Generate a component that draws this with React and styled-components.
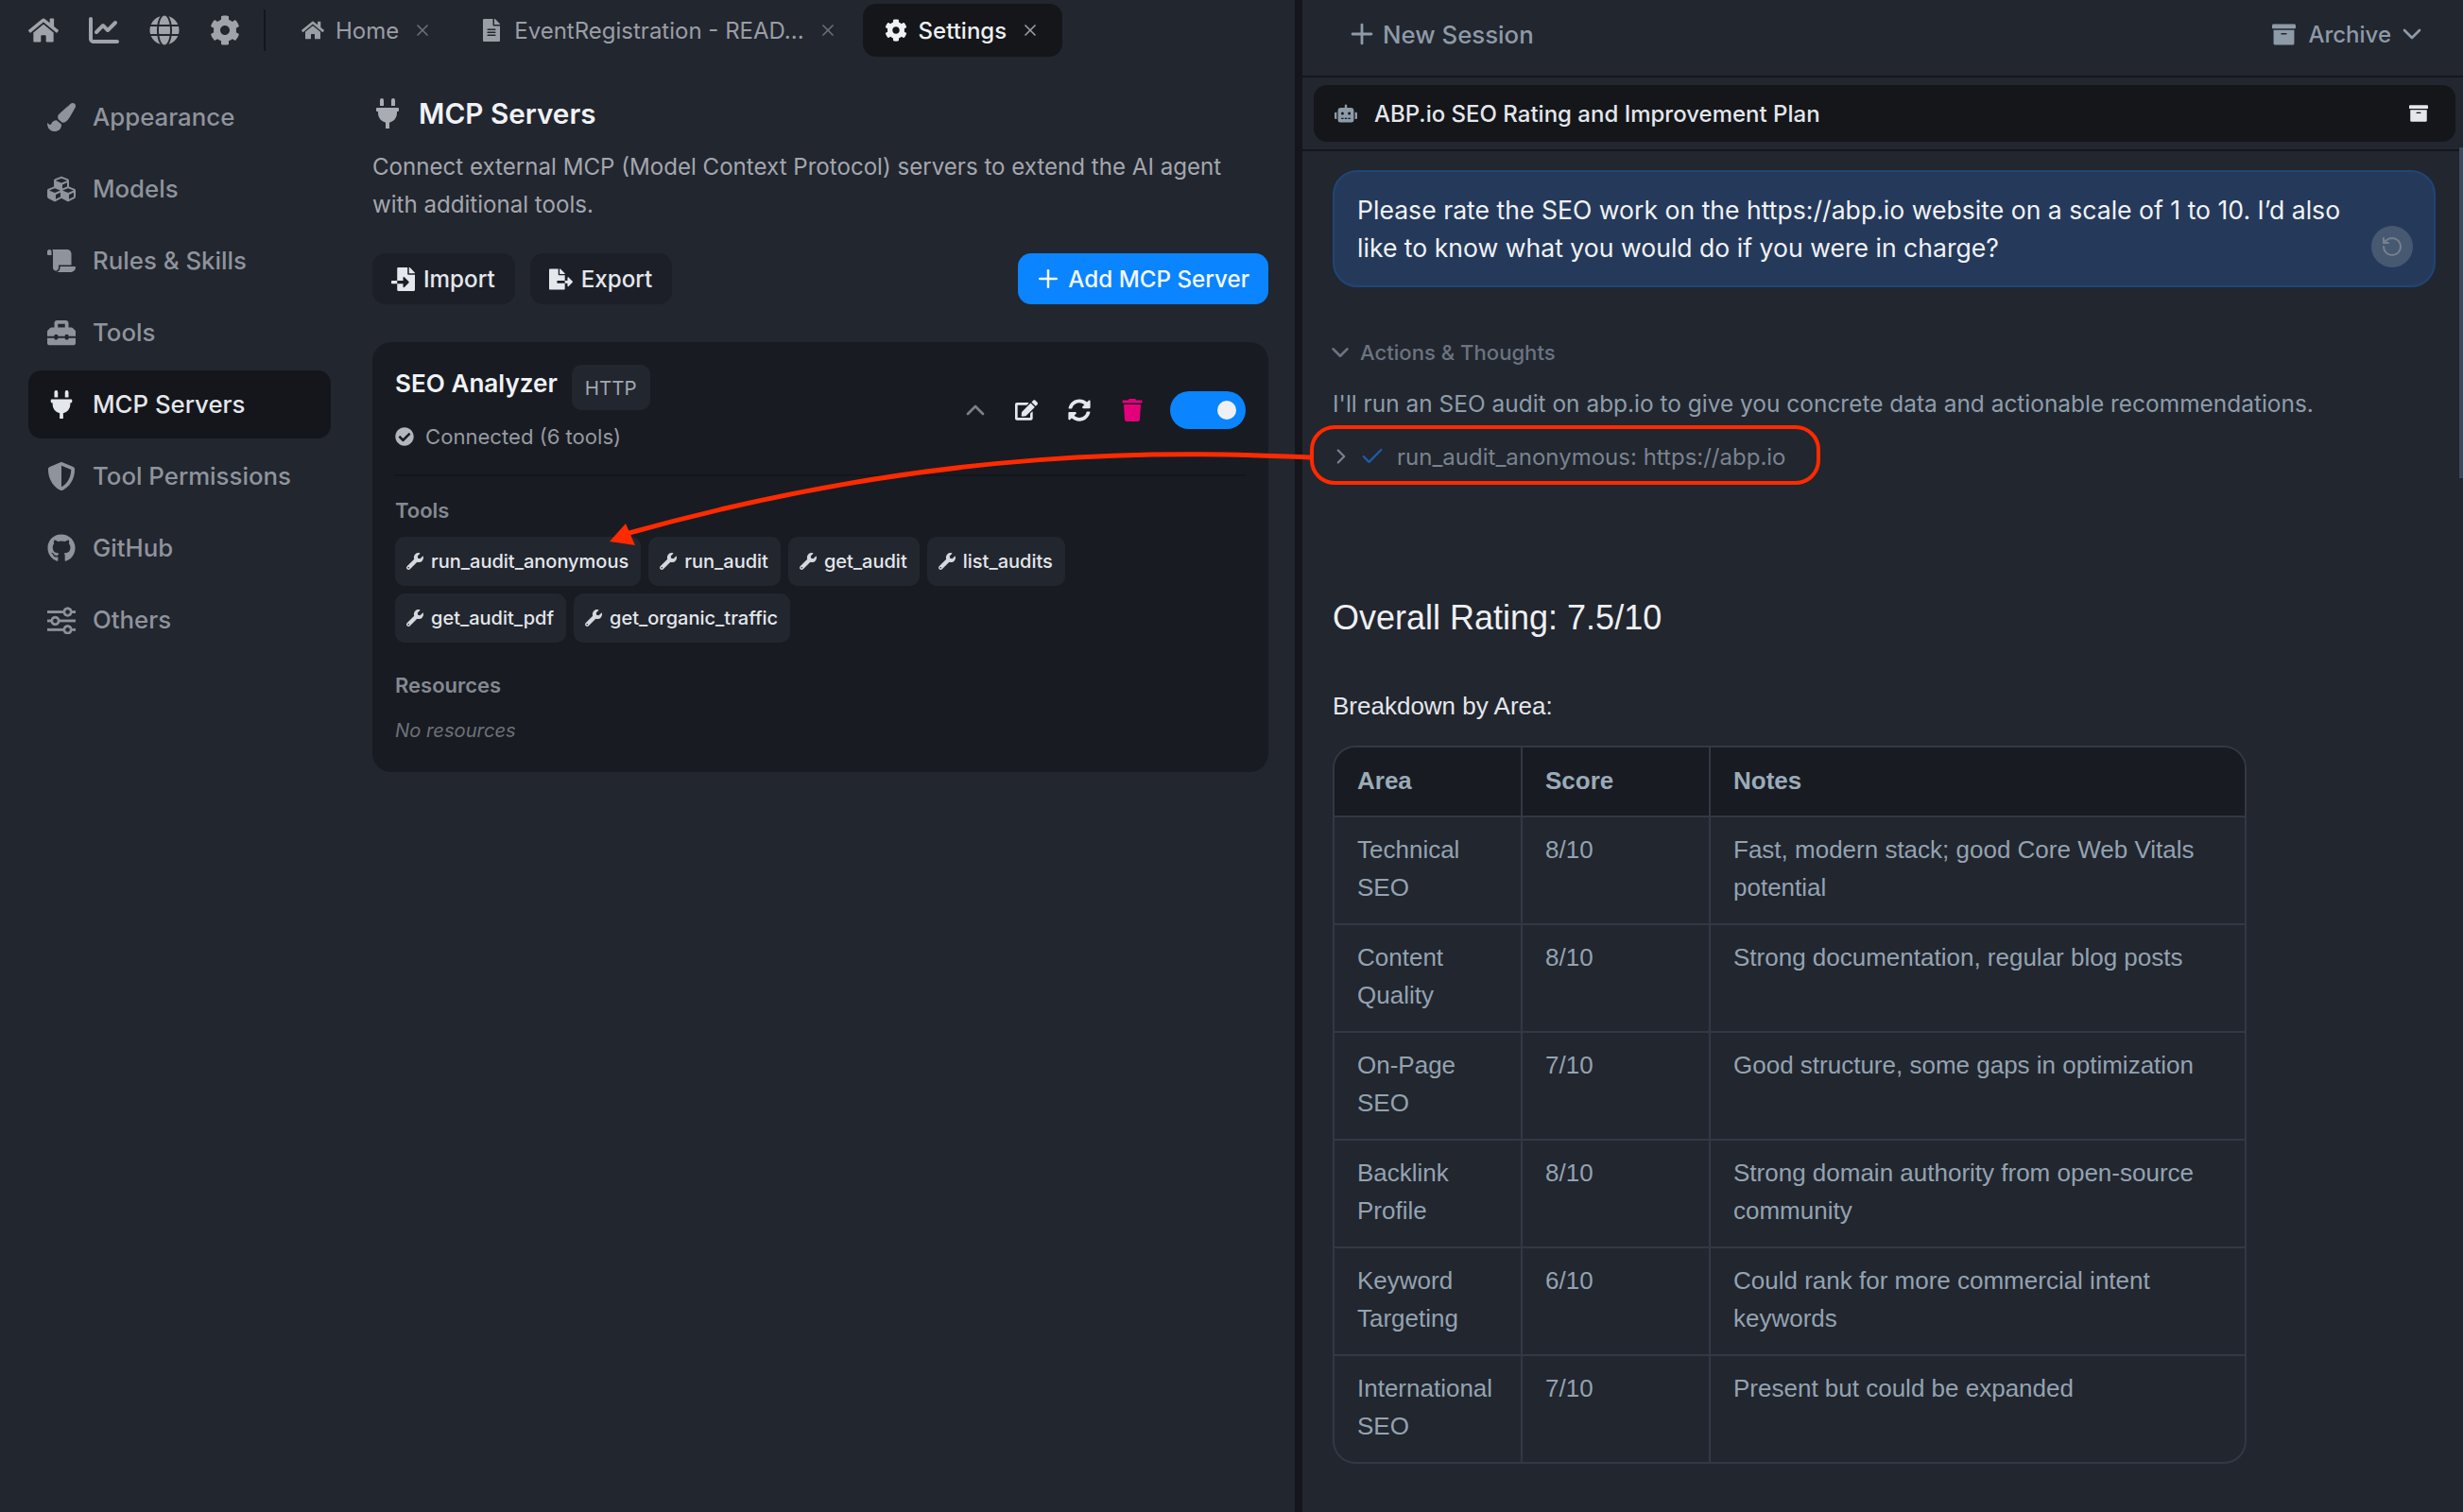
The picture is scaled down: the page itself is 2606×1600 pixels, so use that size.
import styled, { createGlobalStyle } from 'styled-components';
import {
  FaHome, FaGlobe, FaCog, FaFileAlt, FaPaintBrush, FaCubes, FaScroll, FaToolbox, FaPlug,
  FaShieldAlt, FaGithub, FaFileImport, FaFileExport, FaCheckCircle, FaWrench, FaEdit, FaSyncAlt,
  FaTrash, FaRobot, FaArchive,
} from 'react-icons/fa';
import { FaChartLine } from 'react-icons/fa6';
import { BsSliders } from 'react-icons/bs';
import { ChevronDown, ChevronRight, ChevronUp, Check, Plus, RotateCcw, X } from 'lucide-react';

const GlobalStyle = createGlobalStyle`
  html, body { margin: 0; padding: 0; background: #22262f; }
  body { font-family: Inter, "Noto Sans", sans-serif; width: 2606px; height: 1600px; overflow: hidden; }
  * { box-sizing: border-box; }
  svg { flex-shrink: 0; }
`;

const Page = styled.div`
  position: relative;
  display: flex;
  width: 2606px;
  height: 1600px;
  overflow: hidden;
  background: #22262f;
`;

const LeftPane = styled.div`
  width: 1370px;
  flex-shrink: 0;
`;

const Splitter = styled.div`
  width: 8px;
  flex-shrink: 0;
  background: #14161b;
`;

const RightPane = styled.div`
  position: relative;
  flex: 1;
  min-width: 0;
`;

const TopBar = styled.div`
  display: flex;
  align-items: center;
  height: 64px;
  padding-left: 30px;
`;

const NavIcon = styled.span`
  display: flex;
  justify-content: center;
  width: 32px;
  margin-right: 32px;
  font-size: 32px;
  color: #a0a4aa;
`;

const TopDivider = styled.span`
  width: 2px;
  height: 44px;
  margin-left: -7px;
  margin-right: 15px;
  background: #14161b;
`;

const Tab = styled.div`
  display: flex;
  align-items: center;
  height: 56px;
  margin-right: ${(p) => p.$gap || 0}px;
  padding: 0 24px 0 23px;
  border-radius: 14px;
  background: ${(p) => (p.$active ? '#14161a' : 'transparent')};
  color: ${(p) => (p.$active ? '#eef0f3' : '#9a9ea5')};
  font-size: 24px;
  font-weight: ${(p) => (p.$active ? 500 : 400)};
  svg.tab-icon { font-size: 24px; margin-right: 12px; }
  svg.tab-close { margin-left: 15px; color: ${(p) => (p.$active ? '#9a9ea5' : '#6b7078')}; }
`;

const Body = styled.div`
  display: flex;
`;

const Sidebar = styled.nav`
  display: flex;
  flex-direction: column;
  gap: 4px;
  width: 394px;
  flex-shrink: 0;
  padding: 24px 44px 0 30px;
`;

const SideItem = styled.div`
  display: flex;
  align-items: center;
  height: 72px;
  padding: 0 0 1px 20px;
  border-radius: 14px;
  background: ${(p) => (p.$active ? '#14161b' : 'transparent')};
  color: ${(p) => (p.$active ? '#e4e7ec' : '#8f949c')};
  font-size: 25.8px;
  font-weight: 500;
`;

const SideIcon = styled.span`
  display: flex;
  justify-content: center;
  width: 30px;
  margin-right: 18px;
  font-size: 30px;
`;

const SlidersIcon = styled(BsSliders)`
  stroke: currentColor;
  stroke-width: 0.5px;
`;

const Content = styled.main`
  width: 948px;
  padding-top: 36px;
`;

const Heading = styled.h1`
  display: flex;
  align-items: center;
  height: 40px;
  margin: 0 0 17px;
  color: #f0f2f5;
  font-size: 29.7px;
  font-weight: 600;
  svg { font-size: 32px; color: #a9adb3; margin: 0 17px 0 0; }
`;

const Description = styled.p`
  margin: 0 0 31px;
  color: #a3a7ae;
  font-size: 24.1px;
  line-height: 40px;
`;

const ButtonRow = styled.div`
  display: flex;
  gap: 16px;
  margin-bottom: 40px;
`;

const Button = styled.button`
  display: flex;
  align-items: center;
  gap: ${(p) => (p.$primary ? 6 : 9)}px;
  height: 54px;
  margin-left: ${(p) => (p.$primary ? 'auto' : '0')};
  padding: ${(p) => (p.$primary ? '0 20px 0 17px' : '0 21px 0 20px')};
  border: none;
  border-radius: 14px;
  background: ${(p) => (p.$primary ? '#0a84ff' : '#1c1f27')};
  color: ${(p) => (p.$primary ? '#f4f8ff' : '#e4e7ec')};
  font-family: inherit;
  font-size: 24.2px;
  font-weight: 500;
  svg { font-size: 25px; }
`;

const Card = styled.section`
  padding: 24px 24px 29px;
  border-radius: 20px;
  background: #181b22;
`;

const CardHeader = styled.div`
  display: flex;
  align-items: center;
  justify-content: space-between;
  padding-bottom: 20px;
  border-bottom: 2px solid #14161b;
`;

const NameRow = styled.div`
  display: flex;
  align-items: flex-start;
  gap: 15px;
`;

const ServerName = styled.div`
  color: #f0f2f5;
  font-size: 26.1px;
  font-weight: 600;
  line-height: 40px;
`;

const Badge = styled.span`
  display: flex;
  align-items: center;
  height: 48px;
  padding: 0 14px;
  border-radius: 10px;
  background: #22262f;
  color: #a3a7ae;
  font-size: 20.5px;
`;

const Status = styled.div`
  display: flex;
  align-items: center;
  gap: 12px;
  height: 40px;
  margin-top: 8px;
  color: #969aa1;
  font-size: 22.1px;
  svg { font-size: 20px; color: #b3b6bb; }
`;

const Actions = styled.div`
  display: flex;
  align-items: center;
  gap: 32px;
  > :first-child { transform: translateX(2px); }
`;

const ActionIcon = styled.span`
  display: flex;
  justify-content: center;
  width: 24px;
  font-size: 24px;
  color: ${(p) => p.$color || '#e4e7ec'};
`;

const Toggle = styled.span`
  display: flex;
  align-items: center;
  justify-content: flex-end;
  width: 80px;
  height: 40px;
  margin-left: -4px;
  padding-right: 10px;
  border-radius: 20px;
  background: #0a84ff;
  &::after {
    content: '';
    width: 20px;
    height: 20px;
    border-radius: 50%;
    background: #eef0f3;
  }
`;

const SectionLabel = styled.div`
  margin: ${(p) => p.$top}px 0 ${(p) => p.$bottom}px;
  color: #858991;
  font-size: 22px;
  font-weight: 600;
  line-height: 30px;
`;

const Chips = styled.div`
  display: flex;
  flex-wrap: wrap;
  gap: 8px;
  max-width: 800px;
`;

const Chip = styled.span`
  display: flex;
  align-items: center;
  gap: 8px;
  height: 52px;
  padding: 0 13px 0 12px;
  border-radius: 10px;
  background: #22262f;
  color: #e4e7ec;
  font-size: 20px;
  font-weight: 500;
  svg { font-size: 18px; color: #d5d8dc; }
`;

const EmptyText = styled.div`
  padding-top: 1px;
  color: #6d7178;
  font-size: 20.2px;
  font-style: italic;
  line-height: 30px;
`;

const RightHeader = styled.header`
  display: flex;
  align-items: center;
  justify-content: space-between;
  height: 82px;
  padding: 0 38px 8px 46px;
  border-bottom: 2px solid #14161b;
  color: #8d9aa8;
  font-weight: 500;
`;

const NewSession = styled.div`
  display: flex;
  align-items: center;
  gap: 5px;
  font-size: 25.8px;
`;

const ArchiveMenu = styled.div`
  display: flex;
  align-items: center;
  font-size: 24px;
  svg.archive { font-size: 25px; margin-right: 13px; }
  svg.chevron { margin-left: 6px; }
`;

const SessionWrap = styled.div`
  height: 78px;
  padding: 8px 8px 8px 12px;
  border-bottom: 2px solid #14161b;
`;

const SessionBar = styled.div`
  display: flex;
  align-items: center;
  height: 60px;
  padding: 0 29px 0 22px;
  border-radius: 14px;
  background: #14161a;
  color: #e4e7ec;
  font-size: 24px;
  font-weight: 500;
`;

const SessionTitle = styled.span`
  flex: 1;
  margin-left: 18px;
`;

const ScrollArea = styled.div`
  padding: 20px 29px 0 32px;
`;

const Scrollbar = styled.span`
  position: absolute;
  top: 156px;
  right: 0;
  width: 4px;
  height: 350px;
  background: #3d4757;
`;

const UserMessage = styled.div`
  position: relative;
  padding: 20px 70px 20px 24px;
  border: 2px solid #1f4677;
  border-radius: 26px;
  background: #253a5b;
  color: #f0f2f5;
  font-size: 26.6px;
  line-height: 40px;
`;

const RetryButton = styled.span`
  position: absolute;
  right: 22px;
  bottom: 19px;
  display: flex;
  align-items: center;
  justify-content: center;
  width: 44px;
  height: 44px;
  border-radius: 50%;
  background: #475871;
  color: #77818e;
`;

const ThoughtsToggle = styled.div`
  display: flex;
  align-items: center;
  gap: 6px;
  height: 30px;
  margin-top: 54px;
  color: #6b7480;
  font-size: 22.1px;
  font-weight: 500;
  svg { margin-left: -7px; }
`;

const AgentText = styled.p`
  margin: 19px 0 16px;
  color: #8d9daa;
  font-size: 24.45px;
  line-height: 40px;
`;

const ToolRow = styled.div`
  display: flex;
  align-items: center;
  height: 40px;
  color: #79838f;
  font-size: 24px;
  svg.chevron { margin-left: -4px; }
  svg.check { margin: 0 12px 0 6px; color: #1f5aa6; }
`;

const MarkdownTitle = styled.h2`
  margin: 126px 0 48px;
  color: #eef0f3;
  font-family: "Liberation Sans", Arial, sans-serif;
  font-size: 36px;
  font-weight: 400;
  line-height: 50px;
`;

const MarkdownText = styled.p`
  margin: 0 0 22px;
  color: #e4e7ec;
  font-family: "Liberation Sans", Arial, sans-serif;
  font-size: 26px;
  line-height: 40px;
`;

const TableFrame = styled.div`
  width: 967px;
  border: 2px solid #323845;
  border-radius: 24px;
  overflow: hidden;
`;

const Table = styled.table`
  width: 100%;
  table-layout: fixed;
  border-collapse: collapse;
  font-family: "Liberation Sans", Arial, sans-serif;
  font-size: 26px;
  line-height: 40px;
`;

const HeadCell = styled.th`
  height: 73px;
  padding: 0 24px 2px;
  border-left: 2px solid #323845;
  background: #181b22;
  color: #9aabb8;
  font-weight: 700;
  text-align: left;
  &:first-child { border-left: none; }
`;

const Row = styled.tr`
  border-top: 2px solid #323845;
`;

const Cell = styled.td`
  height: 112px;
  padding: 14px 24px 18px;
  border-left: 2px solid #323845;
  color: #93a3b1;
  vertical-align: top;
  &:first-child { border-left: none; }
`;

const Annotation = styled.svg`
  position: absolute;
  top: 0;
  left: 0;
  pointer-events: none;
`;

const navIcons = [FaHome, FaChartLine, FaGlobe, FaCog];

const menu = [
  { label: 'Appearance', Icon: FaPaintBrush },
  { label: 'Models', Icon: FaCubes },
  { label: 'Rules & Skills', Icon: FaScroll },
  { label: 'Tools', Icon: FaToolbox },
  { label: 'MCP Servers', Icon: FaPlug, active: true },
  { label: 'Tool Permissions', Icon: FaShieldAlt },
  { label: 'GitHub', Icon: FaGithub },
  { label: 'Others', Icon: SlidersIcon },
];

const tools = ['run_audit_anonymous', 'run_audit', 'get_audit', 'list_audits', 'get_audit_pdf', 'get_organic_traffic'];

const scores = [
  ['Technical SEO', '8/10', 'Fast, modern stack; good Core Web Vitals potential'],
  ['Content Quality', '8/10', 'Strong documentation, regular blog posts'],
  ['On-Page SEO', '7/10', 'Good structure, some gaps in optimization'],
  ['Backlink Profile', '8/10', 'Strong domain authority from open-source community'],
  ['Keyword Targeting', '6/10', 'Could rank for more commercial intent keywords'],
  ['International SEO', '7/10', 'Present but could be expanded'],
];

const App = () => (
  <Page>
    <GlobalStyle />
    <LeftPane>
      <TopBar>
        {navIcons.map((Icon, i) => (
          <NavIcon key={i}><Icon /></NavIcon>
        ))}
        <TopDivider />
        <Tab $gap={4}>
          <FaHome className="tab-icon" />
          Home
          <X className="tab-close" size={20} />
        </Tab>
        <Tab $gap={3}>
          <FaFileAlt className="tab-icon" />
          EventRegistration - READ...
          <X className="tab-close" size={20} />
        </Tab>
        <Tab $active>
          <FaCog className="tab-icon" />
          Settings
          <X className="tab-close" size={20} />
        </Tab>
      </TopBar>
      <Body>
        <Sidebar>
          {menu.map(({ label, Icon, active }) => (
            <SideItem key={label} $active={active}>
              <SideIcon><Icon /></SideIcon>
              {label}
            </SideItem>
          ))}
        </Sidebar>
        <Content>
          <Heading><FaPlug />MCP Servers</Heading>
          <Description>
            Connect external MCP (Model Context Protocol) servers to extend the AI agent with additional tools.
          </Description>
          <ButtonRow>
            <Button><FaFileImport />Import</Button>
            <Button><FaFileExport />Export</Button>
            <Button $primary><Plus size={30} />Add MCP Server</Button>
          </ButtonRow>
          <Card>
            <CardHeader>
              <div>
                <NameRow>
                  <ServerName>SEO Analyzer</ServerName>
                  <Badge>HTTP</Badge>
                </NameRow>
                <Status><FaCheckCircle />Connected (6 tools)</Status>
              </div>
              <Actions>
                <ActionIcon $color="#7b7f86"><ChevronUp size={32} /></ActionIcon>
                <ActionIcon><FaEdit /></ActionIcon>
                <ActionIcon><FaSyncAlt /></ActionIcon>
                <ActionIcon $color="#e4007a"><FaTrash /></ActionIcon>
                <Toggle />
              </Actions>
            </CardHeader>
            <SectionLabel $top={21} $bottom={13}>Tools</SectionLabel>
            <Chips>
              {tools.map((tool) => (
                <Chip key={tool}><FaWrench />{tool}</Chip>
              ))}
            </Chips>
            <SectionLabel $top={30} $bottom={17}>Resources</SectionLabel>
            <EmptyText>No resources</EmptyText>
          </Card>
        </Content>
      </Body>
    </LeftPane>
    <Splitter />
    <RightPane>
      <RightHeader>
        <NewSession><Plus size={34} />New Session</NewSession>
        <ArchiveMenu>
          <FaArchive className="archive" />
          Archive
          <ChevronDown className="chevron" size={32} />
        </ArchiveMenu>
      </RightHeader>
      <SessionWrap>
        <SessionBar>
          <FaRobot color="#8d9aa8" size={24} />
          <SessionTitle>ABP.io SEO Rating and Improvement Plan</SessionTitle>
          <FaArchive size={20} />
        </SessionBar>
      </SessionWrap>
      <Scrollbar />
      <ScrollArea>
        <UserMessage>
          Please rate the SEO work on the https://abp.io website on a scale of 1 to 10. I’d also like to know what you would do if you were in charge?
          <RetryButton><RotateCcw size={24} /></RetryButton>
        </UserMessage>
        <ThoughtsToggle><ChevronDown size={30} />Actions &amp; Thoughts</ThoughtsToggle>
        <AgentText>I'll run an SEO audit on abp.io to give you concrete data and actionable recommendations.</AgentText>
        <ToolRow>
          <ChevronRight className="chevron" size={26} />
          <Check className="check" size={28} />
          run_audit_anonymous: https://abp.io
        </ToolRow>
        <MarkdownTitle>Overall Rating: 7.5/10</MarkdownTitle>
        <MarkdownText>Breakdown by Area:</MarkdownText>
        <TableFrame>
          <Table>
            <colgroup>
              <col width="198" />
              <col width="199" />
              <col />
            </colgroup>
            <thead>
              <tr>
                <HeadCell>Area</HeadCell>
                <HeadCell>Score</HeadCell>
                <HeadCell>Notes</HeadCell>
              </tr>
            </thead>
            <tbody>
              {scores.map(([area, score, notes]) => (
                <Row key={area}>
                  <Cell>{area}</Cell>
                  <Cell>{score}</Cell>
                  <Cell>{notes}</Cell>
                </Row>
              ))}
            </tbody>
          </Table>
        </TableFrame>
      </ScrollArea>
    </RightPane>
    <Annotation width="2606" height="1600" viewBox="0 0 2606 1600">
      <rect x="1388" y="452" width="536" height="59" rx="24" fill="none" stroke="#ff2a00" strokeWidth="4" />
      <path d="M1386 484C1250 478 1000 470 662 565" fill="none" stroke="#ff2a00" strokeWidth="5" />
      <polygon points="645,573 662,554 672,577" fill="#ff2a00" />
    </Annotation>
  </Page>
);

export default App;
